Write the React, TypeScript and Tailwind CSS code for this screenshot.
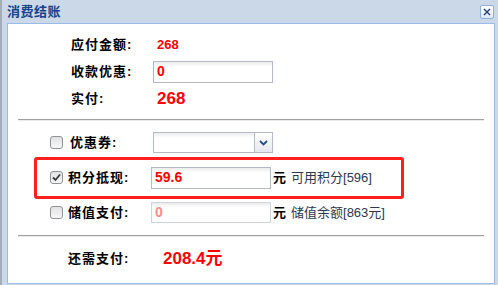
import type { ReactNode } from 'react'

const FONT = { fontFamily: '"Liberation Sans", "Noto Sans CJK SC", sans-serif' }

function CheckBox({ checked }: { checked?: boolean }) {
    return (
        <span className="flex h-[13px] w-[13px] shrink-0 items-center justify-center rounded-[3px] border border-[#8f9399] bg-[linear-gradient(#e2e2e2,#f7f7f7)]">
            {checked && (
                <svg width="9" height="9" viewBox="0 0 9 9">
                    <path d="M1 4.5 L3.5 7 L8 1.5" fill="none" stroke="#3a3a3a" strokeWidth="1.8" />
                </svg>
            )}
        </span>
    )
}

function TextBox({ value, className = '', h = 'h-[22px]' }: { value: string; className?: string; h?: string }) {
    return (
        <div
            className={`flex w-[120px] items-center border border-[#b5b8c8] bg-[linear-gradient(#ececec,#ffffff_5px)] pl-[3px] ${h} ${className}`}
        >
            {value}
        </div>
    )
}

function Row({ children, h }: { children: ReactNode; h: string }) {
    return <div className={`flex items-center ${h}`}>{children}</div>
}

export default function App() {
    return (
        <div
            style={FONT}
            className="flex h-[285px] w-[498px] flex-col overflow-hidden border-l-2 border-[#a4adb8] bg-[#cbd8e8]"
        >
            {/* title bar */}
            <div className="flex h-[23px] shrink-0 items-center justify-between pl-[5px] pr-[4px]">
                <span className="text-[13px] font-bold tracking-[0.5px] text-[#15428b]">消费结账</span>
                <span className="flex h-[14px] w-[14px] items-center justify-center rounded-[2px] border border-[#8fb0d8] bg-[linear-gradient(#ffffff,#dbe6f4)]">
                    <svg width="8" height="8" viewBox="0 0 8 8">
                        <path d="M1 1 L7 7 M7 1 L1 7" stroke="#1e3f78" strokeWidth="1.4" />
                    </svg>
                </span>
            </div>

            {/* body */}
            <div className="relative ml-[5px] h-[261px] w-[488px] border border-[#99bbe8] bg-white text-[13px]">
                <div className="pt-[7px]">
                    <Row h="h-[27px]">
                        <span className="w-[149px] pl-[63px] font-bold tracking-[1px] text-black">应付金额:</span>
                        <span className="font-bold text-[#ff0000]">268</span>
                    </Row>
                    <Row h="h-[27px]">
                        <span className="w-[145px] pl-[63px] font-bold tracking-[1px] text-black">收款优惠:</span>
                        <TextBox value="0" className="text-[14px] font-bold text-[#ff0000]" />
                    </Row>
                    <Row h="h-[27px]">
                        <span className="w-[149px] pl-[63px] font-bold tracking-[1px] text-black">实付:</span>
                        <span className="text-[17px] font-bold text-[#ff0000]">268</span>
                    </Row>
                </div>

                <div className="mx-[10px] mt-[7px] h-[2px] border-t border-b border-t-[#a0a0a0] border-b-[#ececec]" />

                <div className="py-[4px]">
                    <Row h="h-[35px]">
                        <span className="ml-[42px]">
                            <CheckBox />
                        </span>
                        <span className="w-[90px] pl-[7px] font-bold tracking-[1px] text-black">优惠券:</span>
                        <div className="flex h-[21px] w-[120px] border border-[#b5b8c8] bg-[linear-gradient(#ececec,#ffffff_5px)]">
                            <div className="flex-1" />
                            <div className="flex w-[18px] items-center justify-center border-l border-[#b5b8c8] bg-[linear-gradient(#ffffff,#e6e8ee)]">
                                <svg width="9" height="6" viewBox="0 0 9 6">
                                    <path d="M1 1 L4.5 4.5 L8 1" fill="none" stroke="#2a4d8a" strokeWidth="1.8" />
                                </svg>
                            </div>
                        </div>
                    </Row>
                    <Row h="h-[35px]">
                        <span className="ml-[42px]">
                            <CheckBox checked />
                        </span>
                        <span className="w-[88px] pl-[5px] font-bold tracking-[1px] text-black">积分抵现:</span>
                        <TextBox value="59.6" className="text-[14px] font-bold text-[#ff0000]" />
                        <span className="ml-[2px] font-bold text-black">元</span>
                        <span className="ml-[5px] text-[#2b3850]">可用积分[596]</span>
                    </Row>
                    <Row h="h-[35px]">
                        <span className="ml-[42px]">
                            <CheckBox />
                        </span>
                        <span className="w-[88px] pl-[5px] font-bold tracking-[1px] text-black">储值支付:</span>
                        <TextBox
                            value="0"
                            h="h-[21px]"
                            className="border-[#d0d3dc] text-[14px] font-bold text-[#ff8a8a]"
                        />
                        <span className="ml-[2px] font-bold text-black">元</span>
                        <span className="ml-[5px] text-[#2b3850]">储值余额[863元]</span>
                    </Row>
                </div>

                <div className="mx-[10px] mt-[1px] h-[2px] border-t border-b border-t-[#a0a0a0] border-b-[#ececec]" />

                <Row h="h-[44px]">
                    <span className="w-[155px] pl-[60px] font-bold tracking-[1px] text-black">还需支付:</span>
                    <span className="text-[17px] font-bold text-[#ff0000]">208.4元</span>
                </Row>

                {/* highlight annotation */}
                <div className="absolute left-[26px] top-[133px] h-[42px] w-[370px] rounded-[3px] border-[3px] border-[#ff1f1f]" />
            </div>
        </div>
    )
}
